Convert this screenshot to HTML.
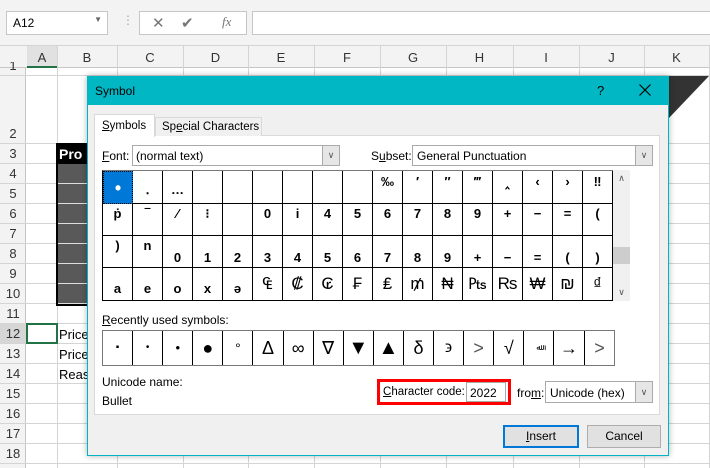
<!DOCTYPE html><html><head><style>
*{box-sizing:border-box;margin:0;padding:0}
body{width:710px;height:468px;overflow:hidden;background:#fff;font-family:"Liberation Sans",sans-serif;position:relative;font-size:12px;color:#000}
.a{position:absolute;white-space:nowrap}
.vl{position:absolute;width:1px;background:#d4d4d4}
.hl{position:absolute;height:1px;background:#d4d4d4}
.rn{position:absolute;left:0;width:26px;text-align:center;font-size:13px;color:#333}
.ch{position:absolute;top:48px;height:20px;line-height:20px;text-align:center;font-size:13px;color:#333}
u{text-decoration:underline}
.cell{position:absolute;border-right:1px solid #000;border-bottom:1px solid #000;text-align:center;font-size:13px;font-weight:bold}
.btn{position:absolute;height:23px;background:#e1e1e1;border:1px solid #adadad;text-align:center;line-height:21px;font-size:12px}
</style></head><body>
<div class="a" style="left:0;top:0;width:710px;height:46px;background:#f3f3f3;border-bottom:1px solid #d4d4d4"></div>
<div class="a" style="left:6px;top:11px;width:102px;height:24px;background:#fff;border:1px solid #c6c6c6;padding:4px 6px;font-size:12px">A12<span style="position:absolute;right:5px;top:3px;font-size:8px;color:#666">▼</span></div>
<div class="a" style="left:122px;top:13px;color:#aaa">⋮</div>
<div class="a" style="left:139px;top:11px;width:108px;height:24px;background:#fff;border:1px solid #c6c6c6;color:#777;font-size:15px"><span class="a" style="left:12px;top:2px">✕</span><span class="a" style="left:41px;top:2px">✔</span><span class="a" style="left:82px;top:2px;font-family:'Liberation Serif';font-style:italic;font-size:13px">fx</span></div>
<div class="a" style="left:252px;top:11px;width:460px;height:24px;background:#fff;border:1px solid #c6c6c6"></div>
<div class="a" style="left:0;top:46px;width:710px;height:22px;background:#f3f3f3;border-bottom:1px solid #c6c6c6"></div>
<div class="a" style="left:0;top:68px;width:26px;height:400px;background:#f3f3f3;border-right:1px solid #c6c6c6"></div>
<div class="a" style="left:27px;top:46px;width:30px;height:22px;background:#e1e1e1;border-bottom:2px solid #217346"></div>
<div class="ch" style="left:27px;width:30px">A</div><div class="ch" style="left:57px;width:60px">B</div><div class="ch" style="left:117px;width:66px">C</div><div class="ch" style="left:183px;width:65px">D</div><div class="ch" style="left:248px;width:66px">E</div><div class="ch" style="left:314px;width:66px">F</div><div class="ch" style="left:380px;width:66px">G</div><div class="ch" style="left:446px;width:67px">H</div><div class="ch" style="left:513px;width:66px">I</div><div class="ch" style="left:579px;width:65px">J</div><div class="ch" style="left:644px;width:65px">K</div>
<div class="vl" style="left:57px;top:46px;height:422px"></div><div class="vl" style="left:117px;top:46px;height:422px"></div><div class="vl" style="left:183px;top:46px;height:422px"></div><div class="vl" style="left:248px;top:46px;height:422px"></div><div class="vl" style="left:314px;top:46px;height:422px"></div><div class="vl" style="left:380px;top:46px;height:422px"></div><div class="vl" style="left:446px;top:46px;height:422px"></div><div class="vl" style="left:513px;top:46px;height:422px"></div><div class="vl" style="left:579px;top:46px;height:422px"></div><div class="vl" style="left:644px;top:46px;height:422px"></div><div class="vl" style="left:709px;top:46px;height:422px"></div>
<div class="hl" style="left:0;top:75px;width:710px"></div>
<div class="hl" style="left:0;top:143px;width:710px"></div><div class="hl" style="left:0;top:163px;width:710px"></div><div class="hl" style="left:0;top:183px;width:710px"></div><div class="hl" style="left:0;top:203px;width:710px"></div><div class="hl" style="left:0;top:223px;width:710px"></div><div class="hl" style="left:0;top:243px;width:710px"></div><div class="hl" style="left:0;top:263px;width:710px"></div><div class="hl" style="left:0;top:283px;width:710px"></div><div class="hl" style="left:0;top:303px;width:710px"></div><div class="hl" style="left:0;top:323px;width:710px"></div><div class="hl" style="left:0;top:343px;width:710px"></div><div class="hl" style="left:0;top:363px;width:710px"></div><div class="hl" style="left:0;top:383px;width:710px"></div><div class="hl" style="left:0;top:403px;width:710px"></div><div class="hl" style="left:0;top:423px;width:710px"></div><div class="hl" style="left:0;top:443px;width:710px"></div><div class="hl" style="left:0;top:463px;width:710px"></div>
<div class="rn" style="top:62px;height:13px;overflow:hidden;line-height:8px">1</div><div class="rn" style="top:126px">2</div><div class="rn" style="top:146px">3</div><div class="rn" style="top:166px">4</div><div class="rn" style="top:186px">5</div><div class="rn" style="top:206px">6</div><div class="rn" style="top:226px">7</div><div class="rn" style="top:246px">8</div><div class="rn" style="top:266px">9</div><div class="rn" style="top:286px">10</div><div class="rn" style="top:306px">11</div><div class="a" style="left:0;top:324px;width:26px;height:19px;background:#d6d6d6"></div><div class="rn" style="top:326px">12</div><div class="rn" style="top:346px">13</div><div class="rn" style="top:366px">14</div><div class="rn" style="top:386px">15</div><div class="rn" style="top:406px">16</div><div class="rn" style="top:426px">17</div><div class="rn" style="top:446px">18</div>
<div class="a" style="left:56px;top:143px;width:34px;height:163px;background:#000"></div>
<div class="a" style="left:59px;top:146px;color:#fff;font-weight:bold;font-size:14px">Pro</div>
<div class="a" style="left:58px;top:164px;width:32px;height:140px;background:repeating-linear-gradient(#595959 0 19px,#ddd 19px 20px)"></div>
<div class="a" style="left:26px;top:323px;width:32px;height:21px;border:2px solid #217346"></div>
<div class="a" style="left:59px;top:327px;font-size:13px">Price</div><div class="a" style="left:59px;top:347px;font-size:13px">Price</div><div class="a" style="left:59px;top:367px;font-size:13px">Reas</div>
<svg class="a" style="left:668px;top:76px" width="42" height="44"><polygon points="0,0 41,0 0,43" fill="#333"/></svg>
<div class="a" style="left:87px;top:76px;width:582px;height:380px;background:#f0f0f0;border:1px solid #00b4c4;box-shadow:0 0 6px rgba(0,0,0,.3)"></div>
<div class="a" style="left:87px;top:76px;width:582px;height:29px;background:#00b7c3"></div>
<div class="a" style="left:95px;top:84px;font-size:12px">Symbol</div>
<div class="a" style="left:597px;top:83px;font-size:13px">?</div>
<svg class="a" style="left:639px;top:84px" width="12" height="12"><path d="M0.5 0.5L11.5 11.5M11.5 0.5L0.5 11.5" stroke="#000" stroke-width="1.2"/></svg>
<div class="a" style="left:94px;top:135px;width:566px;height:280px;background:#fff;border:1px solid #d9d9d9"></div>
<div class="a" style="left:94px;top:114px;width:61px;height:23px;background:#fff;border:1px solid #d9d9d9;border-bottom:none;padding:5px 0 0 7px;font-size:11.5px"><u>S</u>ymbols</div>
<div class="a" style="left:155px;top:117px;width:107px;height:19px;background:#f0f0f0;border:1px solid #d9d9d9;border-bottom:none;padding:3px 0 0 6px;font-size:11.5px">Sp<u>e</u>cial Characters</div>
<div class="a" style="left:102px;top:149px"><u>F</u>ont:</div>
<div class="a" style="left:132px;top:145px;width:208px;height:21px;border:1px solid #aaa;background:#fff;padding:3px 3px">(normal text)<span class="a" style="right:0;top:0;width:17px;height:19px;background:#e6e6e6;border-left:1px solid #aaa;font-size:9px;text-align:center;line-height:19px;color:#555">∨</span></div>
<div class="a" style="left:371px;top:149px">S<u>u</u>bset:</div>
<div class="a" style="left:412px;top:145px;width:241px;height:21px;border:1px solid #aaa;background:#fff;padding:3px 4px">General Punctuation<span class="a" style="right:0;top:0;width:17px;height:19px;background:#e6e6e6;border-left:1px solid #aaa;font-size:9px;text-align:center;line-height:19px;color:#555">∨</span></div>
<div class="a" style="left:102px;top:170px;width:511px;height:131px;border-left:1px solid #000;border-top:1px solid #777" id="g"></div>
<div class="a" style="left:613px;top:170px;width:17px;height:131px;background:#f0f0f0;font-size:9px;text-align:center;color:#555"><div style="margin-top:3px">∧</div><div class="a" style="left:0;top:77px;width:17px;height:17px;background:#cdcdcd"></div><div class="a" style="left:0;bottom:3px;width:17px">∨</div></div>
<div class="a" style="left:102px;top:313px"><u>R</u>ecently used symbols:</div>
<div class="a" style="left:102px;top:330px;width:513px;height:36px;border:1px solid #777;display:flex" id="r"></div>
<div class="a" style="left:102px;top:375px">Unicode name:</div>
<div class="a" style="left:102px;top:394px">Bullet</div>
<div class="a" style="left:377px;top:379px;width:134px;height:26px;border:3px solid #f00"></div>
<div class="a" style="left:383px;top:386px;font-size:11.5px"><u>C</u>haracter code:</div>
<div class="a" style="left:466px;top:382px;width:40px;height:20px;border:1px solid #aaa;background:#fff;padding:3px 3px">2022</div>
<div class="a" style="left:517px;top:386px">fro<u>m</u>:</div>
<div class="a" style="left:545px;top:381px;width:108px;height:22px;border:1px solid #aaa;background:#fff;padding:4px 4px">Unicode (hex)<span class="a" style="right:0;top:0;width:17px;height:20px;background:#e6e6e6;border-left:1px solid #aaa;font-size:9px;text-align:center;line-height:20px;color:#555">∨</span></div>
<div class="btn" style="left:503px;top:425px;width:76px;border:2px solid #0078d7;line-height:19px"><u>I</u>nsert</div>
<div class="btn" style="left:587px;top:425px;width:74px">Cancel</div>
<script>
var rows=[["•","․","…","","","","","","","‰","′","″","‴","‸","‹","›","‼"],["ṗ","‾","⁄","⁝","","0","i","4","5","6","7","8","9","+","−","=","("],[")","n","0","1","2","3","4","5","6","7","8","9","+","−","=","(",")"],["a","e","o","x","ə","₠","₡","₢","₣","₤","₥","₦","₧","₨","₩","₪","₫"]];
var g=document.getElementById('g'),h='';
var ys=[0,33,65,97],hs=[33,32,32,33];
rows.forEach(function(r,i){r.forEach(function(c,j){var sel=(i==0&&j==0);var p=(i==2&&j<2)?'padding-bottom:10px;':(i==2?'padding-top:12px;':(i==3&&j<5?'padding-top:10px;':(i==0&&j<3?'padding-top:8px;':'')));h+='<div class="cell" style="left:'+(j*30)+'px;top:'+ys[i]+'px;width:30px;height:'+hs[i]+'px;line-height:'+(hs[i]-12)+'px;'+p+(sel?'background:#0078d7;color:#fff;border:1px dotted #000;padding-top:6px;font-size:18px;':'')+(i==3&&j>4?'font-size:17px;font-weight:normal;line-height:32px;':'')+'">'+c+'</div>';});});
g.innerHTML=h;
var rc=["▪","•","•","●","°","Δ","∞","∇","▼","▲","δ","϶","&gt;","√","ﷲ","→","&gt;"],rh='';
var fs=[10,10,13,18,14,18,18,18,20,20,18,16,18,18,8,18,18];
rc.forEach(function(c,i){rh+='<div style="width:30.1px;flex:none;border-right:'+(i<16?'1px solid #000':'none')+';text-align:center;line-height:34px;font-size:'+fs[i]+'px;'+(i==12||i==16?'color:#555;':'')+'">'+c+'</div>';});
document.getElementById('r').innerHTML=rh;
</script>
</body></html>
